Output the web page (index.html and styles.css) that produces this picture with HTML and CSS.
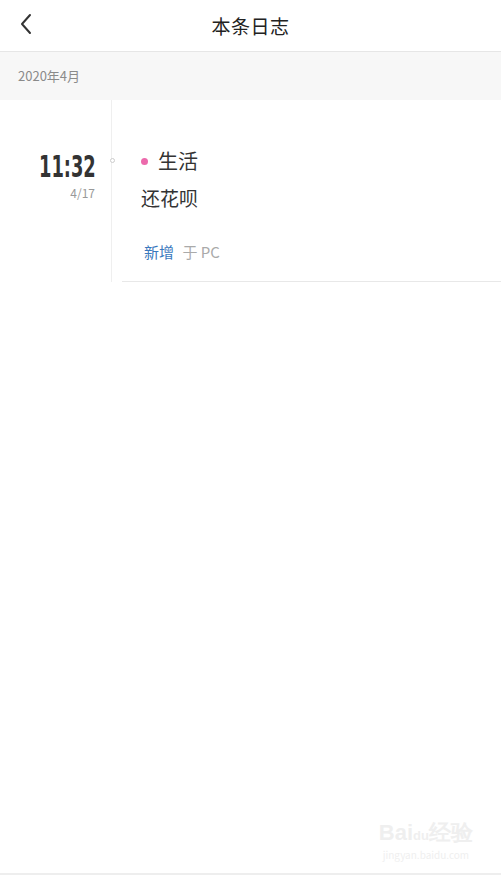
FILE: index.html
```html
<!DOCTYPE html>
<html lang="zh">
<head>
  <meta charset="UTF-8" />
  <meta name="viewport" content="width=device-width, initial-scale=1.0"/>
  <title>本条日志</title>
  <link rel="stylesheet" href="styles.css">
</head>
<body>
  <div class="page">
    <div class="header">
      <svg class="back" width="14" height="22" viewBox="0 0 14 22">
        <path d="M11 2 L3 11 L11 20" fill="none" stroke="#333" stroke-width="2" stroke-linecap="round" stroke-linejoin="round"/>
      </svg>
      <div class="title">本条日志</div>
    </div>

    <div class="month">2020年4月</div>

    <div class="entry">
      <div class="time-col">
        <div class="time">11:32</div>
        <div class="date">4/17</div>
      </div>
      <div class="axis">
        <span class="node"></span>
      </div>
      <div class="content">
        <div class="tag"><span class="dot"></span>生活</div>
        <div class="text">还花呗</div>
        <div class="meta"><span class="action">新增</span> 于 PC</div>
      </div>
    </div>

    <div class="spacer"></div>

    <div class="watermark">
      <div class="wm-logo">Bai<span class="wm-du">du</span>经验</div>
      <div class="wm-url">jingyan.baidu.com</div>
    </div>
    <div class="footer-line"></div>
  </div>
</body>
</html>
```

FILE: styles.css
```css
body {
  margin: 0;
  background: #fff;
  font-family: "Noto Sans CJK SC", "Noto Sans", sans-serif;
  color: #333;
}

.page {
  height: 876px;
  display: flex;
  flex-direction: column;
}

.header {
  height: 51px;
  border-bottom: 1px solid #e6e6e6;
  display: flex;
  align-items: center;
  justify-content: center;
  position: relative;
}

.back {
  position: absolute;
  left: 19px;
  top: 13px;
}

.title {
  font-size: 19px;
  color: #222;
  letter-spacing: 0.5px;
}

.month {
  height: 48px;
  background: #f7f7f7;
  color: #8a8a8a;
  font-size: 13px;
  line-height: 48px;
  padding-left: 18px;
}

.entry {
  display: flex;
  height: 182px;
}

.time-col {
  width: 96px;
  padding-top: 48px;
  display: flex;
  flex-direction: column;
  align-items: flex-end;
}

.time {
  font-family: "DejaVu Sans Condensed", "Liberation Sans", sans-serif;
  font-weight: bold;
  font-size: 31px;
  line-height: 36px;
  color: #333;
  transform: scaleX(0.64);
  transform-origin: right center;
}

.date {
  font-size: 12px;
  color: #999;
  line-height: 17px;
  margin-right: 1px;
}

.axis {
  width: 15px;
  border-right: 1px solid #efefef;
  position: relative;
}

.node {
  position: absolute;
  right: -4px;
  top: 58px;
  width: 3px;
  height: 3px;
  border: 1px solid #ccc;
  border-radius: 50%;
  background: #fff;
}

.content {
  flex: 1;
  margin-left: 10px;
  border-bottom: 1px solid #e8e8e8;
  padding-left: 19px;
  padding-top: 44px;
}

.tag {
  display: flex;
  align-items: center;
  font-size: 20px;
  line-height: 34px;
  color: #333;
}

.dot {
  width: 7px;
  height: 7px;
  border-radius: 50%;
  background: #ec6aac;
  margin-left: 0;
  margin-right: 10px;
}

.text {
  font-size: 19px;
  line-height: 40px;
  color: #333;
}

.meta {
  margin-top: 23px;
  font-size: 15px;
  color: #aaa;
  padding-left: 3px;
}

.action {
  color: #3a78bd;
  margin-right: 5px;
}

.spacer {
  flex: 1;
}

.watermark {
  align-self: flex-end;
  margin-right: 28px;
  margin-bottom: 12px;
  color: #efefef;
  text-align: center;
}

.wm-logo {
  font-family: "Liberation Sans", sans-serif;
  font-size: 22px;
  font-weight: bold;
  line-height: 26px;
}

.wm-du {
  font-size: 13px;
}

.wm-url {
  font-size: 10px;
  line-height: 12px;
}

.footer-line {
  height: 2px;
  background: #eee;
  margin-bottom: 1px;
}
```
